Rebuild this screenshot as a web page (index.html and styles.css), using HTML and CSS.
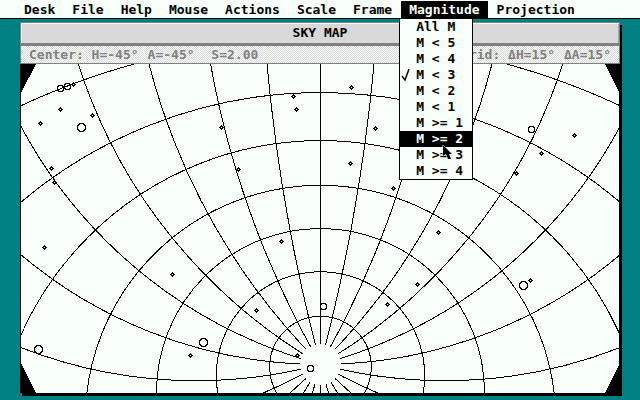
FILE: index.html
```html
<!DOCTYPE html>
<html lang="en">
<head>
  <meta charset="UTF-8">
  <meta name="viewport" content="width=device-width, initial-scale=1.0">
  <title>Sky Map</title>
  <link rel="stylesheet" href="styles.css">
</head>
<body>
  <nav class="menu-bar">
    <button type="button" class="menu-title">Desk</button>
    <button type="button" class="menu-title">File</button>
    <button type="button" class="menu-title">Help</button>
    <button type="button" class="menu-title">Mouse</button>
    <button type="button" class="menu-title">Actions</button>
    <button type="button" class="menu-title">Scale</button>
    <button type="button" class="menu-title">Frame</button>
    <div class="menu-open">
      <button type="button" class="menu-title active">Magnitude</button>
      <div class="dropdown">
        <button type="button" class="item">All M</button>
        <button type="button" class="item">M &lt; 5</button>
        <button type="button" class="item">M &lt; 4</button>
        <button type="button" class="item">
          <svg class="check" viewBox="0 0 10 14"><path d="M1 8l3 4L8 1"/></svg>M &lt; 3
        </button>
        <button type="button" class="item">M &lt; 2</button>
        <button type="button" class="item">M &lt; 1</button>
        <button type="button" class="item">M &gt;= 1</button>
        <button type="button" class="item selected">M &gt;= 2
          <svg class="cursor" viewBox="0 0 10 16"><path d="M1 0v11l3-2 2 5h3l-2-5h3z"/></svg>
        </button>
        <button type="button" class="item">M &gt;= 3</button>
        <button type="button" class="item">M &gt;= 4</button>
      </div>
    </div>
    <button type="button" class="menu-title">Projection</button>
  </nav>

  <main class="window">
    <h1 class="title-bar">SKY MAP</h1>
    <div class="info-bar">
      <div class="info">
        <span>Center: H=-45°</span>
        <span>A=-45°</span>
        <span>&nbsp;S=2.00</span>
      </div>
      <div class="info">
        <span>Grid: ΔH=15°</span>
        <span>ΔA=15°</span>
      </div>
    </div>
    <svg class="map" viewBox="0 0 598 329" preserveAspectRatio="xMidYMid slice">
      <!-- stereographic grid, 15 degree step -->
      <g class="grid">
        <circle cx="299.5" cy="303.1" r="50.8"/>
        <circle cx="299.5" cy="311.9" r="104.2"/>
        <circle cx="299.5" cy="328.5" r="164"/>
        <circle cx="299.5" cy="356.6" r="235.3"/>
        <circle cx="299.5" cy="404.6" r="328"/>
        <circle cx="299.5" cy="492.5" r="463.9"/>
        <circle cx="299.5" cy="681.9" r="706.8"/>
        <path d="M299.5 0v329"/>
        <circle cx="2030.7" cy="-163.5" r="1792.2"/>
        <circle cx="-1431.7" cy="-163.5" r="1792.2"/>
        <circle cx="1102.9" cy="-163.5" r="927.7"/>
        <circle cx="-503.9" cy="-163.5" r="927.7"/>
        <circle cx="763.4" cy="-163.5" r="656"/>
        <circle cx="-164.4" cy="-163.5" r="656"/>
        <circle cx="567.3" cy="-163.5" r="535.6"/>
        <circle cx="31.7" cy="-163.5" r="535.6"/>
        <circle cx="423.8" cy="-163.5" r="480.2"/>
        <circle cx="175.2" cy="-163.5" r="480.2"/>
        <circle cx="299.5" cy="-163.5" r="463.9"/>
      </g>
      <circle class="pole" cx="299.5" cy="300.4" r="20.5"/>
      <path class="corner" d="M0 0h15L0 29zM598 0h-14l14 28zM0 329h15L0 299zM598 329h-14l14-28z"/>
      <defs>
        <path id="s" class="small" d="M-.5-2.5h1v1h1v1h1v1h-1v1h-1v1h-1v-1h-1v-1h-1v-1h1v-1h1zM-.5-.5v1h1v-1z"/>
        <path id="m" d="M-1.5-3h3L3-1.5v3L1.5 3h-3L-3 1.5v-3z"/>
        <path id="b" d="M-1.5-4h3L4-1.5v3L1.5 4h-3L-4 1.5v-3z"/>
      </defs>
      <g class="stars">
        <use href="#s" x="52.5" y="20.5"/>
        <use href="#s" x="39.5" y="45.5"/>
        <use href="#s" x="19.5" y="59.5"/>
        <use href="#s" x="71.5" y="51.5"/>
        <use href="#s" x="30.5" y="104.5"/>
        <use href="#s" x="33.5" y="118.5"/>
        <use href="#s" x="272.5" y="32.5"/>
        <use href="#s" x="275.5" y="45.5"/>
        <use href="#s" x="330.5" y="23.5"/>
        <use href="#s" x="354.5" y="64.5"/>
        <use href="#s" x="200.5" y="63.5"/>
        <use href="#s" x="217.5" y="105.5"/>
        <use href="#s" x="329.5" y="99.5"/>
        <use href="#s" x="372.5" y="124.5"/>
        <use href="#s" x="553.5" y="71.5"/>
        <use href="#s" x="520.5" y="89.5"/>
        <use href="#s" x="495.5" y="109.5"/>
        <use href="#s" x="417.5" y="168.5"/>
        <use href="#s" x="23.5" y="183.5"/>
        <use href="#s" x="151.5" y="210.5"/>
        <use href="#s" x="169.5" y="291.5"/>
        <use href="#s" x="260.5" y="177.5"/>
        <use href="#s" x="235.5" y="246.5"/>
        <use href="#s" x="366.5" y="240.5"/>
        <use href="#s" x="396.5" y="220.5"/>
        <use href="#s" x="276.5" y="291.5"/>
        <use href="#s" x="509.5" y="216.5"/>
        <use href="#m" x="39.5" y="24.5"/>
        <use href="#m" x="46.5" y="22.5"/>
        <use href="#m" x="510.5" y="65.5"/>
        <use href="#m" x="302.5" y="242.5"/>
        <use href="#m" x="289.5" y="304.5"/>
        <use href="#b" x="60.5" y="63.5"/>
        <use href="#b" x="17.5" y="285.5"/>
        <use href="#b" x="182.5" y="278.5"/>
        <use href="#b" x="502.5" y="221.5"/>
      </g>
    </svg>
  </main>
</body>
</html>
```
FILE: styles.css
```css
* {
  margin: 0;
  padding: 0;
  box-sizing: border-box;
}

body {
  background-color: #008080;
  min-height: 100vh;
  display: flex;
  flex-direction: column;
  font: bold 13px/16px "DejaVu Sans Mono", monospace;
  color: #000;
}

button {
  font: inherit;
  color: inherit;
  background: none;
  border: none;
  text-align: left;
  white-space: nowrap;
}

.menu-bar {
  display: flex;
  gap: 1px;
  height: 19px;
  padding: 1px 16px 0;
  background: #f8fffb;
  border-bottom: 1px solid #000;
}

.menu-title {
  display: block;
  height: 17px;
  padding: 0 8px;
}

.menu-title.active {
  background: #000;
  color: #f8fffb;
}

.menu-open {
  position: relative;
}

.dropdown {
  position: absolute;
  z-index: 1;
  top: 17px;
  left: -2px;
  width: 74px;
  background: #f8fffb;
  border: 1px solid #000;
}

.item {
  display: block;
  position: relative;
  width: 100%;
  height: 16px;
  padding-left: 16px;
}

.item.selected {
  background: #000;
  color: #f8fffb;
}

.check {
  position: absolute;
  left: 1px;
  top: 1px;
  width: 10px;
  height: 14px;
  fill: none;
  stroke: #000;
  stroke-width: 1.5;
}

.cursor {
  position: absolute;
  z-index: 2;
  left: 42px;
  top: 14px;
  width: 10px;
  height: 16px;
  fill: #000;
  stroke: #f8fffb;
  stroke-width: 1;
  paint-order: stroke;
  overflow: visible;
}

.window {
  flex: 1;
  display: flex;
  flex-direction: column;
  margin: 3px 20px 7px;
  box-shadow: 2px 3px #000;
}

.title-bar {
  height: 23px;
  border: 1px solid #808080;
  border-bottom-width: 2px;
  background: #d8d8d8;
  box-shadow: inset 1px 1px #f8fffb, inset -1px 0 #a8a8a8;
  font-size: 13px;
  line-height: 20px;
  text-align: center;
}

.info-bar {
  display: flex;
  justify-content: space-between;
  height: 19px;
  padding: 1px 8px 0;
  border: 1px solid #808080;
  background: repeating-conic-gradient(#d8d8d8 0 25%, #f8fffb 0 50%) 0 0 / 2px 2px;
  color: #808080;
}

.info {
  display: flex;
  gap: 9px;
}

.map {
  flex: 1;
  display: block;
  width: 100%;
  min-height: 0;
  background: #f8fffb;
  border: solid #000;
  border-width: 0 1px;
  shape-rendering: crispEdges;
}

.grid,
.stars {
  fill: none;
  stroke: #000;
}

.small {
  fill: #000;
  fill-rule: evenodd;
  stroke: none;
}

.pole {
  fill: #f8fffb;
}
```
